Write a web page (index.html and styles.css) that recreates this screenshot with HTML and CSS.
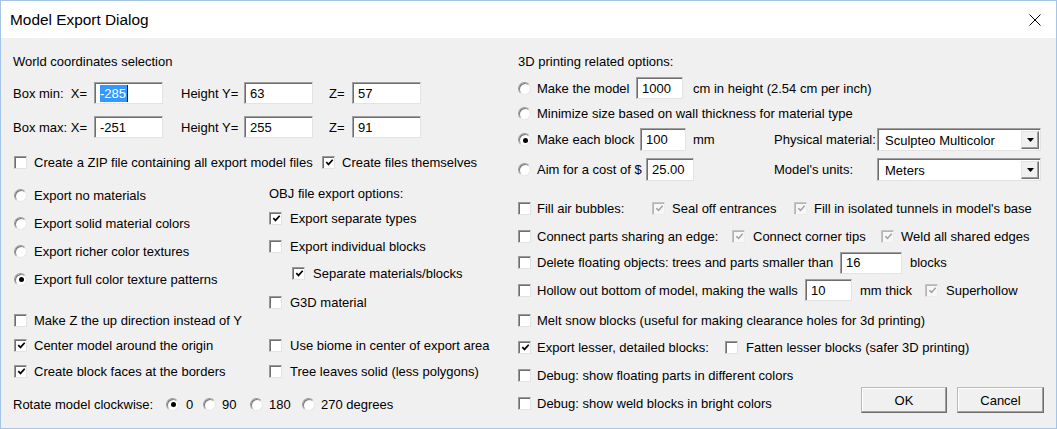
FILE: index.html
```html
<!DOCTYPE html>
<html>
<head>
<meta charset="utf-8">
<title>Model Export Dialog</title>
<link rel="stylesheet" href="styles.css">
</head>
<body>
<div class="window">
  <div class="titlebar">
    <span class="title">Model Export Dialog</span>
    <svg class="close" width="12" height="12" viewBox="0 0 12 12"><path d="M0.5 0.5 L11.5 11.5 M11.5 0.5 L0.5 11.5" stroke="#000" stroke-width="1" fill="none"/></svg>
  </div>
  <div class="content">
    <div class="col-left">
      <div class="row mt-13">World coordinates selection</div>
      <div class="row h22 mt-11">
        <span class="lbl w81">Box min:&nbsp; X=</span>
        <span class="edit w69"><span class="sel">-285</span></span>
        <span class="lbl w63 ml-18">Height Y=</span>
        <span class="edit w69">63</span>
        <span class="lbl w23 ml-16">Z=</span>
        <span class="edit w69">57</span>
      </div>
      <div class="row h22 mt-12">
        <span class="lbl w81">Box max: X=</span>
        <span class="edit w69">-251</span>
        <span class="lbl w63 ml-18">Height Y=</span>
        <span class="edit w69">255</span>
        <span class="lbl w23 ml-16">Z=</span>
        <span class="edit w69">91</span>
      </div>
      <div class="row mt-14">
        <span class="cb ml-1"></span><span class="lbl ml-7 w288">Create a ZIP file containing all export model files</span>
        <span class="cb on"><svg width="9" height="9" viewBox="0 0 9 9"><path d="M1.3 4.2 L3.5 6.4 L7.7 1.8" fill="none" stroke="#000" stroke-width="1.7"/></svg></span><span class="lbl ml-7">Create files themselves</span>
      </div>
      <div class="split">
        <div class="sub-a">
          <div class="row mt-13"><span class="rb ml-1"></span><span class="lbl ml-7">Export no materials</span></div>
          <div class="row mt-8"><span class="rb ml-1"></span><span class="lbl ml-7">Export solid material colors</span></div>
          <div class="row mt-8"><span class="rb ml-1"></span><span class="lbl ml-7">Export richer color textures</span></div>
          <div class="row mt-8"><span class="rb on ml-1"></span><span class="lbl ml-7">Export full color texture patterns</span></div>
          <div class="row mt-21"><span class="cb ml-1"></span><span class="lbl ml-7">Make Z the up direction instead of Y</span></div>
          <div class="row mt-5"><span class="cb on ml-1"><svg width="9" height="9" viewBox="0 0 9 9"><path d="M1.3 4.2 L3.5 6.4 L7.7 1.8" fill="none" stroke="#000" stroke-width="1.7"/></svg></span><span class="lbl ml-7">Center model around the origin</span></div>
          <div class="row mt-6"><span class="cb on ml-1"><svg width="9" height="9" viewBox="0 0 9 9"><path d="M1.3 4.2 L3.5 6.4 L7.7 1.8" fill="none" stroke="#000" stroke-width="1.7"/></svg></span><span class="lbl ml-7">Create block faces at the borders</span></div>
        </div>
        <div class="sub-b">
          <div class="row mt-11">OBJ file export options:</div>
          <div class="row mt-5"><span class="cb on"><svg width="9" height="9" viewBox="0 0 9 9"><path d="M1.3 4.2 L3.5 6.4 L7.7 1.8" fill="none" stroke="#000" stroke-width="1.7"/></svg></span><span class="lbl ml-8">Export separate types</span></div>
          <div class="row mt-8"><span class="cb"></span><span class="lbl ml-8">Export individual blocks</span></div>
          <div class="row mt-7"><span class="cb on ml-23"><svg width="9" height="9" viewBox="0 0 9 9"><path d="M1.3 4.2 L3.5 6.4 L7.7 1.8" fill="none" stroke="#000" stroke-width="1.7"/></svg></span><span class="lbl ml-8">Separate materials/blocks</span></div>
          <div class="row mt-9"><span class="cb"></span><span class="lbl ml-8">G3D material</span></div>
          <div class="row mt-23"><span class="cb"></span><span class="lbl ml-8">Use biome in center of export area</span></div>
          <div class="row mt-6"><span class="cb"></span><span class="lbl ml-8">Tree leaves solid (less polygons)</span></div>
        </div>
      </div>
      <div class="row mt-13">
        <span class="lbl w153">Rotate model clockwise:</span>
        <span class="rb on"></span><span class="lbl ml-7 w17">0</span>
        <span class="rb"></span><span class="lbl ml-6 w28">90</span>
        <span class="rb"></span><span class="lbl ml-6 w33">180</span>
        <span class="rb"></span><span class="lbl ml-6">270 degrees</span>
      </div>
    </div>

    <div class="col-right">
      <div class="row mt-13">3D printing related options:</div>
      <div class="row h22 mt-6">
        <span class="rb"></span><span class="lbl ml-6 w99">Make the model</span>
        <span class="edit w47">1000</span>
        <span class="lbl ml-10">cm in height (2.54 cm per inch)</span>
      </div>
      <div class="row mt-4"><span class="rb"></span><span class="lbl ml-6">Minimize size based on wall thickness for material type</span></div>
      <div class="row h23 mt-5">
        <span class="rb on"></span><span class="lbl ml-6 w103">Make each block</span>
        <span class="edit h23 w46">100</span>
        <span class="lbl ml-7 w81">mm</span>
        <span class="lbl w103">Physical material:</span>
        <span class="combo"><span class="val">Sculpteo Multicolor</span><span class="arrow"><svg width="7" height="4" viewBox="0 0 7 4"><path d="M0 0 H7 L3.5 4 Z" fill="#000"/></svg></span></span>
      </div>
      <div class="row h23 mt-7">
        <span class="rb"></span><span class="lbl ml-6 w109">Aim for a cost of $</span>
        <span class="edit h23 w48">25.00</span>
        <span class="lbl ml-80 w103">Model's units:</span>
        <span class="combo"><span class="val">Meters</span><span class="arrow"><svg width="7" height="4" viewBox="0 0 7 4"><path d="M0 0 H7 L3.5 4 Z" fill="#000"/></svg></span></span>
      </div>
      <div class="row mt-17">
        <span class="cb"></span><span class="lbl ml-6 w115">Fill air bubbles:</span>
        <span class="cb on dis"><svg width="9" height="9" viewBox="0 0 9 9"><path d="M1.3 4.2 L3.5 6.4 L7.7 1.8" fill="none" stroke="#a0a0a0" stroke-width="1.5"/></svg></span><span class="lbl ml-7 w122">Seal off entrances</span>
        <span class="cb on dis"><svg width="9" height="9" viewBox="0 0 9 9"><path d="M1.3 4.2 L3.5 6.4 L7.7 1.8" fill="none" stroke="#a0a0a0" stroke-width="1.5"/></svg></span><span class="lbl ml-7">Fill in isolated tunnels in model's base</span>
      </div>
      <div class="row mt-8">
        <span class="cb"></span><span class="lbl ml-6 w195">Connect parts sharing an edge:</span>
        <span class="cb on dis"><svg width="9" height="9" viewBox="0 0 9 9"><path d="M1.3 4.2 L3.5 6.4 L7.7 1.8" fill="none" stroke="#a0a0a0" stroke-width="1.5"/></svg></span><span class="lbl ml-8 w128">Connect corner tips</span>
        <span class="cb on dis"><svg width="9" height="9" viewBox="0 0 9 9"><path d="M1.3 4.2 L3.5 6.4 L7.7 1.8" fill="none" stroke="#a0a0a0" stroke-width="1.5"/></svg></span><span class="lbl ml-7">Weld all shared edges</span>
      </div>
      <div class="row h23 mt-5">
        <span class="cb"></span><span class="lbl ml-6 w303">Delete floating objects: trees and parts smaller than</span>
        <span class="edit w62">16</span>
        <span class="lbl ml-8">blocks</span>
      </div>
      <div class="row h22 mt-5">
        <span class="cb"></span><span class="lbl ml-6 w268">Hollow out bottom of model, making the walls</span>
        <span class="edit w47">10</span>
        <span class="lbl ml-8 w65">mm thick</span>
        <span class="cb on dis"><svg width="9" height="9" viewBox="0 0 9 9"><path d="M1.3 4.2 L3.5 6.4 L7.7 1.8" fill="none" stroke="#a0a0a0" stroke-width="1.5"/></svg></span><span class="lbl ml-8">Superhollow</span>
      </div>
      <div class="row mt-9"><span class="cb"></span><span class="lbl ml-6">Melt snow blocks (useful for making clearance holes for 3d printing)</span></div>
      <div class="row mt-7">
        <span class="cb on"><svg width="9" height="9" viewBox="0 0 9 9"><path d="M1.3 4.2 L3.5 6.4 L7.7 1.8" fill="none" stroke="#000" stroke-width="1.7"/></svg></span><span class="lbl ml-6 w188">Export lesser, detailed blocks:</span>
        <span class="cb"></span><span class="lbl ml-8">Fatten lesser blocks (safer 3D printing)</span>
      </div>
      <div class="footer-area">
        <div class="debug-rows">
          <div class="row mt-8"><span class="cb"></span><span class="lbl ml-6">Debug: show floating parts in different colors</span></div>
          <div class="row mt-8"><span class="cb"></span><span class="lbl ml-6">Debug: show weld blocks in bright colors</span></div>
        </div>
        <div class="buttons">
          <button class="btn ok">OK</button>
          <button class="btn cancel">Cancel</button>
        </div>
      </div>
    </div>
  </div>
</div>
</body>
</html>
```
FILE: styles.css
```css
* { box-sizing: border-box; }
html, body { margin: 0; padding: 0; }
body {
  font: 13px/15px "Liberation Sans", Arial, sans-serif;
  color: #000;
  background: #f0f0f0;
}
.window {
  width: 1057px;
  height: 429px;
  border: 1px solid #a3c6e8;
  background: #f0f0f0;
  display: flex;
  flex-direction: column;
  overflow: hidden;
}
.titlebar {
  flex: none;
  height: 37px;
  background: #fff;
  display: flex;
  align-items: center;
  justify-content: space-between;
  padding: 0 15px 0 9px;
}
.title { font-size: 15.4px; line-height: 18px; }
.close { display: block; }

.content { display: flex; flex: 1; }
.col-left { flex: none; width: 517px; padding-left: 12px; }
.col-right { flex: 1; }

.row {
  display: flex;
  align-items: center;
  height: 20px;
  white-space: nowrap;
}
.row.h22 { height: 22px; }
.row.h23 { height: 23px; }

.split { display: flex; }
.sub-a { flex: none; width: 256px; }
.sub-b { flex: 1; }

.lbl { flex: none; display: block; }

/* spacing utilities */
.mt-4 { margin-top: 4px; } .mt-5 { margin-top: 5px; } .mt-6 { margin-top: 6px; }
.mt-7 { margin-top: 7px; } .mt-8 { margin-top: 8px; } .mt-9 { margin-top: 9px; }
.mt-11 { margin-top: 11px; } .mt-12 { margin-top: 12px; } .mt-13 { margin-top: 13px; }
.mt-14 { margin-top: 14px; } .mt-17 { margin-top: 17px; } .mt-21 { margin-top: 21px; }
.mt-23 { margin-top: 23px; }
.ml-1 { margin-left: 1px; } .ml-6 { margin-left: 6px; } .ml-7 { margin-left: 7px; }
.ml-8 { margin-left: 8px; } .ml-10 { margin-left: 10px; } .ml-16 { margin-left: 16px; }
.ml-18 { margin-left: 18px; } .ml-23 { margin-left: 23px; } .ml-80 { margin-left: 80px; }

/* widths */
.w17 { width: 17px; } .w23 { width: 23px; } .w28 { width: 28px; } .w33 { width: 33px; }
.w46 { width: 46px; } .w47 { width: 47px; } .w48 { width: 48px; } .w62 { width: 62px; }
.w63 { width: 63px; } .w65 { width: 65px; } .w69 { width: 69px; } .w81 { width: 81px; }
.w99 { width: 99px; } .w103 { width: 103px; } .w109 { width: 109px; } .w115 { width: 115px; }
.w122 { width: 122px; } .w128 { width: 128px; } .w153 { width: 153px; } .w188 { width: 188px; }
.w195 { width: 195px; } .w268 { width: 268px; } .w288 { width: 288px; } .w303 { width: 303px; }

/* checkbox */
.cb {
  flex: none;
  width: 13px;
  height: 13px;
  background: #fff;
  border: 1px solid;
  border-color: #9a9a9a #e3e3e3 #e3e3e3 #9a9a9a;
  box-shadow: inset 1px 1px 0 #6e6e6e;
  display: flex;
  align-items: center;
  justify-content: center;
  padding: 1px 0 0 1px;
}
.cb svg { display: block; }
.cb.dis {
  background: #f7f7f7;
  border-color: #c4c4c4 #ececec #ececec #c4c4c4;
  box-shadow: inset 1px 1px 0 #b4b4b4;
}

/* radio */
.rb {
  flex: none;
  width: 13px;
  height: 13px;
  border-radius: 50%;
  background: #fff;
  border: 1px solid;
  border-color: #9a9a9a #e6e6e6 #e6e6e6 #9a9a9a;
  box-shadow: inset 1px 1px 0 #7a7a7a;
  display: flex;
  align-items: center;
  justify-content: center;
}
.rb.on::after {
  content: "";
  width: 5px;
  height: 5px;
  border-radius: 50%;
  background: #000;
  margin: 1px 0 0 1px;
}

/* edit box */
.edit {
  flex: none;
  height: 22px;
  background: #fff;
  border: 1px solid;
  border-color: #a0a0a0 #e3e3e3 #e3e3e3 #a0a0a0;
  box-shadow: inset 1px 1px 0 #6e6e6e;
  padding-left: 5px;
  display: flex;
  align-items: center;
}
.edit.h23 { height: 23px; }
.sel {
  background: #3399ff;
  color: #fff;
  line-height: 17px;
  padding-right: 1px;
  border-right: 1px solid #1a1a1a;
}

/* combo box */
.combo {
  flex: none;
  width: 164px;
  height: 23px;
  background: #fff;
  border: 1px solid;
  border-color: #a0a0a0 #e3e3e3 #e3e3e3 #a0a0a0;
  box-shadow: inset 1px 1px 0 #6e6e6e;
  display: flex;
  align-items: stretch;
  padding: 2px 1px 1px 2px;
}
.combo .val {
  flex: 1;
  padding-left: 5px;
  display: flex;
  align-items: center;
}
.combo .arrow {
  flex: none;
  width: 18px;
  background: #f0f0f0;
  border: 1px solid;
  border-color: #e3e3e3 #6e6e6e #6e6e6e #e3e3e3;
  box-shadow: inset -1px -1px 0 #a0a0a0;
  display: flex;
  align-items: center;
  justify-content: center;
}
.combo .arrow svg { display: block; }

/* footer */
.footer-area {
  display: flex;
  justify-content: space-between;
  align-items: flex-end;
}
.buttons {
  display: flex;
  gap: 10px;
  margin-right: 12px;
}
.btn {
  font: 13px/15px "Liberation Sans", Arial, sans-serif;
  color: #000;
  height: 26px;
  width: 86px;
  padding: 0;
  background: #f0f0f0;
  border: 1px solid;
  border-color: #b9b9b9 #6e6e6e #6e6e6e #b9b9b9;
  box-shadow: inset -1px -1px 0 #a0a0a0, inset 1px 1px 0 #fff;
  display: flex;
  align-items: center;
  justify-content: center;
}
.btn.cancel { width: 87px; }
```
